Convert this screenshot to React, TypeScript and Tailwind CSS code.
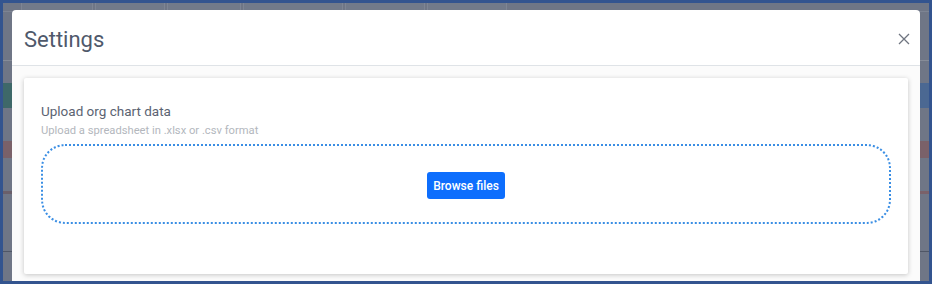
import React from 'react';

const font = { fontFamily: 'Roboto, "Noto Sans", sans-serif' };

// faded page behind the modal overlay
const Backdrop: React.FC = () => (
  <div className="flex h-full w-full flex-col bg-[#6f7686]">
    <div className="flex h-[9px] gap-[2px] border-b border-[#7d8493] pl-[18px]">
      {[72, 70, 74, 100, 80, 80].map((w, i) => (
        <div key={i} className="h-full border-x border-[#7e8594] bg-[#727a8a]" style={{ width: w }} />
      ))}
    </div>
    <div className="h-[48px]" />
    <div className="h-px bg-[#868c98]" />
    <div className="h-[22px]" />
    <div className="flex h-[25px] justify-between">
      <div className="w-[12px] bg-[#3e6869]" />
      <div className="w-[14px] bg-[#4b6892]" />
    </div>
    <div className="h-[33px]" />
    <div className="flex h-[17px] justify-between">
      <div className="w-[12px] bg-[#7a6169]" />
      <div className="w-[14px] bg-[#7a6169]" />
    </div>
    <div className="h-[33px]" />
    <div className="flex h-[3px] justify-between">
      <div className="w-[12px] bg-[#6a5f6a]" />
      <div className="w-[14px] bg-[#7a6169]" />
    </div>
    <div className="h-[57px]" />
    <div className="h-px bg-[#4f5666]" />
  </div>
);

export default function App() {
  return (
    <div className="relative h-[284px] w-[932px] overflow-hidden border-[3px] border-[#33548f]" style={font}>
      <Backdrop />

      {/* Modal */}
      <div className="absolute left-[9px] top-[7px] flex h-[290px] w-[908px] flex-col rounded-t-[4px] bg-white">
        <div className="flex h-[56px] items-center justify-between border-b border-[#dfe3e7] pl-[12px] pr-[6px]">
          <h2 className="mt-[4px] text-[22px] font-normal text-[#4f596b]">Settings</h2>
          <svg width="12" height="12" viewBox="0 0 12 12" className="mr-[4px] mt-[2px]">
            <path d="M1 1L11 11M11 1L1 11" stroke="#6f7580" strokeWidth="1.3" />
          </svg>
        </div>

        <div className="flex-1 bg-[#fbfbfb] px-[12px] pt-[12px]">
          <div className="h-[196px] rounded-[2px] bg-white px-[17px] pt-[24px] shadow-[0_1px_5px_rgba(0,0,0,0.22)]">
            <div className="text-[13.5px] leading-[18px] text-[#5b6372]">Upload org chart data</div>
            <div className="mt-[4px] text-[11.2px] leading-[14px] text-[#b3b7bd]">
              Upload a spreadsheet in .xlsx or .csv format
            </div>
            <div className="mt-[6px] flex h-[80px] items-center justify-center rounded-[24px] border-2 border-dotted border-[#3a8ee4]">
              <button className="mt-[3px] h-[27px] w-[78px] rounded-[3px] bg-[#0d6efd] text-[12px] font-medium text-white">
                Browse files
              </button>
            </div>
          </div>
        </div>
      </div>
    </div>
  );
}
